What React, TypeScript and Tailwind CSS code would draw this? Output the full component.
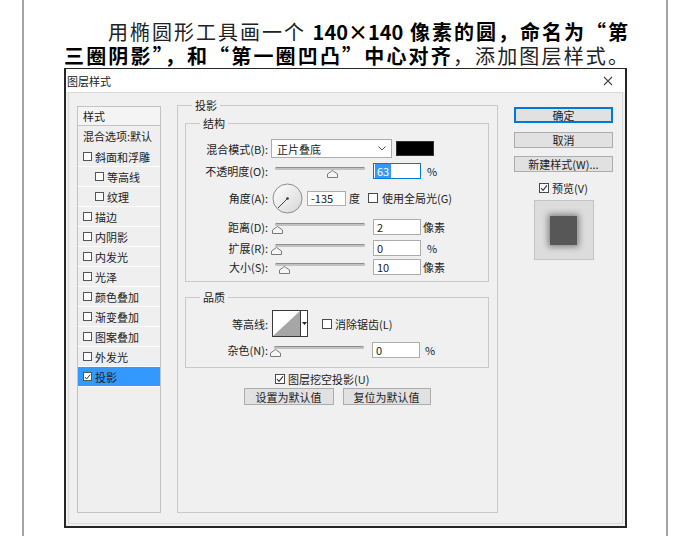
import React from "react";

function Box({ checked = false, small = false }: { checked?: boolean; small?: boolean }) {
  return (
    <span
      className={
        small
          ? "flex h-[9px] w-[9px] shrink-0 items-center justify-center border border-[#555] bg-white"
          : "flex h-[10px] w-[10px] shrink-0 items-center justify-center border border-[#4a4a4a] bg-white"
      }
    >
      {checked && (
        <svg width="8" height="8" viewBox="0 0 8 8">
          <polyline points="1,4 3,6.3 7,1.3" fill="none" stroke="#333" strokeWidth="1.1" />
        </svg>
      )}
    </span>
  );
}

// slider; "at" is the thumb centre measured from the left of the control
function Slider({ at }: { at: number }) {
  return (
    <div className="relative h-[18px] w-[95px] shrink-0">
      <div className="absolute left-[4px] right-[1px] top-[5px] h-[3px] rounded-full border-t border-[#8e8e8e] bg-[#c2c2c2]" />
      <svg className="absolute top-[8px]" style={{ left: at - 5.5 }} width="11" height="8" viewBox="0 0 11 8">
        <polygon points="0.5,7.5 0.5,4 5.5,0.5 10.5,4 10.5,7.5" fill="#f5f5f5" stroke="#7a7a7a" />
      </svg>
    </div>
  );
}

function Field({ value }: { value: string }) {
  return (
    <div className="ml-[7px] flex h-[16px] w-[48px] shrink-0 items-center border border-[#abadb3] bg-white pl-[3px]">
      {value}
    </div>
  );
}

function Label({ children }: { children: React.ReactNode }) {
  return <span className="w-[82px] shrink-0 text-right">{children}</span>;
}

const layers: { name: string; sub?: boolean; active?: boolean }[] = [
  { name: "斜面和浮雕" },
  { name: "等高线", sub: true },
  { name: "纹理", sub: true },
  { name: "描边" },
  { name: "内阴影" },
  { name: "内发光" },
  { name: "光泽" },
  { name: "颜色叠加" },
  { name: "渐变叠加" },
  { name: "图案叠加" },
  { name: "外发光" },
  { name: "投影", active: true },
];

function StyleList() {
  return (
    <div className="mt-[8px] h-[407px] w-[84px] shrink-0 border border-[#c3c3c3] bg-[#efefef]">
      <div className="h-[19px] border-b border-[#c3c3c3] bg-[#f4f4f4] pl-[5px] leading-[18px]">样式</div>
      <div className="flex h-[20px] items-center pl-[5px]">混合选项:默认</div>
      <div className="mt-[1px]">
        {layers.map((l) => (
          <div
            key={l.name}
            className={
              (l.sub ? "pl-[17px] " : "pl-[5px] ") +
              (l.active ? "bg-[#3399ff] " : "") +
              "flex h-[20px] items-center gap-[3px] border-b border-white"
            }
          >
            <Box small checked={l.active} />
            <span>{l.name}</span>
          </div>
        ))}
      </div>
    </div>
  );
}

function DropShadow() {
  return (
    <fieldset className="ml-[16px] h-[415px] w-[321px] shrink-0 border border-[#c9c9c9] pl-[7px] pr-[8px] pt-[4px]">
      <legend className="ml-[7px] px-[3px]">投影</legend>

      <fieldset className="border border-[#c9c9c9] pb-[5px] pt-[9px]">
        <legend className="ml-[14px] px-[3px]">结构</legend>
        <div className="flex h-[19px] items-center">
          <Label>混合模式(B):</Label>
          <div className="ml-[3px] flex h-[19px] w-[121px] items-center justify-between border border-[#acacac] bg-white pl-[5px] pr-[5px]">
            <span>正片叠底</span>
            <svg width="8" height="5" viewBox="0 0 8 5">
              <polyline points="0.5,0.5 4,4 7.5,0.5" fill="none" stroke="#555" />
            </svg>
          </div>
          <div className="ml-[4px] h-[15px] w-[38px] border border-[#333] bg-black" />
        </div>
        <div className="mt-[4px] flex h-[18px] items-center">
          <Label>不透明度(O):</Label>
          <div className="ml-[3px]">
            <Slider at={61} />
          </div>
          <div className="ml-[7px] flex h-[16px] w-[48px] shrink-0 items-center border border-[#0078d7] bg-white pl-[1px]">
            <span className="bg-[#3399ff] px-[2px] text-white">63</span>
          </div>
          <span className="ml-[6px]">%</span>
        </div>
        <div className="mt-[3px] flex h-[30px] items-center">
          <Label>角度(A):</Label>
          <svg className="ml-[4px] shrink-0" width="31" height="31" viewBox="0 0 31 31">
            <defs>
              <linearGradient id="dial" x1="0" y1="0" x2="1" y2="1">
                <stop offset="0" stopColor="#ffffff" />
                <stop offset="1" stopColor="#d6d6d6" />
              </linearGradient>
            </defs>
            <circle cx="15.5" cy="15.5" r="14.5" fill="url(#dial)" stroke="#8c8c8c" />
            <line x1="15.5" y1="15.5" x2="6" y2="25" stroke="#444" strokeWidth="1" />
            <circle cx="15.5" cy="15.5" r="1.3" fill="#333" />
          </svg>
          <div className="ml-[4px] flex h-[15px] w-[39px] shrink-0 items-center border border-[#abadb3] bg-white pl-[3px]">
            -135
          </div>
          <span className="ml-[3px]">度</span>
          <span className="ml-[8px]">
            <Box />
          </span>
          <span className="ml-[4px]">使用全局光(G)</span>
        </div>
        <div className="mt-[5px] flex h-[18px] items-center">
          <Label>距离(D):</Label>
          <div className="ml-[3px]">
            <Slider at={6} />
          </div>
          <Field value="2" />
          <span className="ml-[2px]">像素</span>
        </div>
        <div className="mt-[3px] flex h-[18px] items-center">
          <Label>扩展(R):</Label>
          <div className="ml-[3px]">
            <Slider at={5} />
          </div>
          <Field value="0" />
          <span className="ml-[6px]">%</span>
        </div>
        <div className="mt-[1px] flex h-[18px] items-center">
          <Label>大小(S):</Label>
          <div className="ml-[3px]">
            <Slider at={13} />
          </div>
          <Field value="10" />
          <span className="ml-[2px]">像素</span>
        </div>
      </fieldset>

      <fieldset className="mt-[8px] border border-[#c9c9c9] pb-[8px] pt-[6px]">
        <legend className="ml-[14px] px-[3px]">品质</legend>
        <div className="flex h-[27px] items-center">
          <Label>等高线:</Label>
          <div className="ml-[4px] flex h-[27px] w-[36px] shrink-0 border border-[#3a3a3a] bg-white">
            <svg width="27" height="25" viewBox="0 0 27 25">
              <polygon points="0,25 27,0 27,25" fill="#a6a6a6" />
            </svg>
            <div className="flex w-[7px] items-center justify-center border-l border-[#3a3a3a]">
              <svg width="5" height="3" viewBox="0 0 5 3">
                <polygon points="0,0 5,0 2.5,3" fill="#222" />
              </svg>
            </div>
          </div>
          <span className="ml-[14px]">
            <Box />
          </span>
          <span className="ml-[3px]">消除锯齿(L)</span>
        </div>
        <div className="mt-[4px] flex h-[18px] items-center">
          <Label>杂色(N):</Label>
          <div className="ml-[2px]">
            <Slider at={5} />
          </div>
          <Field value="0" />
          <span className="ml-[5px]">%</span>
        </div>
      </fieldset>

      <div className="mt-[4px] flex h-[14px] items-center gap-[3px] pl-[90px]">
        <Box checked />
        <span>图层挖空投影(U)</span>
      </div>
      <div className="mt-[2px] flex justify-center gap-[9px]">
        <button className="h-[17px] w-[90px] border border-[#adadad] bg-[#e1e1e1]">设置为默认值</button>
        <button className="h-[17px] w-[88px] border border-[#adadad] bg-[#e1e1e1]">复位为默认值</button>
      </div>
    </fieldset>
  );
}

function Side() {
  return (
    <div className="ml-[16px] mt-[9px] flex w-[99px] shrink-0 flex-col items-center">
      <button className="h-[16px] w-full border border-[#0078d7] bg-[#e1e1e1] shadow-[inset_0_0_0_1px_#0078d7]">确定</button>
      <button className="mt-[9px] h-[16px] w-full border border-[#adadad] bg-[#e1e1e1]">取消</button>
      <button className="mt-[8px] h-[16px] w-full border border-[#adadad] bg-[#e1e1e1]">新建样式(W)...</button>
      <div className="mt-[9px] flex h-[14px] items-center gap-[3px]">
        <Box checked />
        <span>预览(V)</span>
      </div>
      <div className="mt-[5px] flex h-[60px] w-[60px] items-center justify-center border border-[#c4c4c4] bg-[#dcdcdc]">
        <div className="h-[29px] w-[27px] bg-[#575757] shadow-[0_0_6px_2px_rgba(0,0,0,0.4)]" />
      </div>
    </div>
  );
}

function Dialog() {
  return (
    <div className="w-[563px] border-x-2 border-b-2 border-t border-[#262626] bg-[#f0f0f0] text-[11px] leading-[14px] text-[#222]">
      <div className="flex h-[23px] items-center justify-between bg-white pl-[1px] pr-[12px]">
        <span>图层样式</span>
        <svg width="10" height="10" viewBox="0 0 10 10">
          <path d="M1 1L9 9M9 1L1 9" stroke="#444" strokeWidth="1.1" />
        </svg>
      </div>
      <div className="mx-[2px] mb-[2px] flex border border-[#d9d9d9] pb-[10px] pl-[8px] pt-[5px]">
        <StyleList />
        <DropShadow />
        <Side />
      </div>
    </div>
  );
}

export default function App() {
  return (
    <div className="h-[536px] w-[690px] overflow-hidden bg-white pl-[22px] font-['Noto_Sans_CJK_SC','Noto_Sans',sans-serif]">
      <div className="h-full w-[646px] border-x-2 border-[#a5a5a5] pl-[40px] pt-[20px]">
        <div className="w-[564px] text-[20px] leading-[24px] text-black">
          <div className="pl-[44px] text-justify [text-align-last:justify]">
            <span className="font-normal text-[#222]">用椭圆形工具画一个</span>
            <span className="font-bold"> 140×140 像素的圆，命名为“第</span>
          </div>
          <div className="text-justify [text-align-last:justify]">
            <span className="font-bold">三圈阴影”，和“第一圈凹凸”中心对齐</span>
            <span className="font-normal text-[#222]">，添加图层样式。</span>
          </div>
        </div>
        <Dialog />
      </div>
    </div>
  );
}
